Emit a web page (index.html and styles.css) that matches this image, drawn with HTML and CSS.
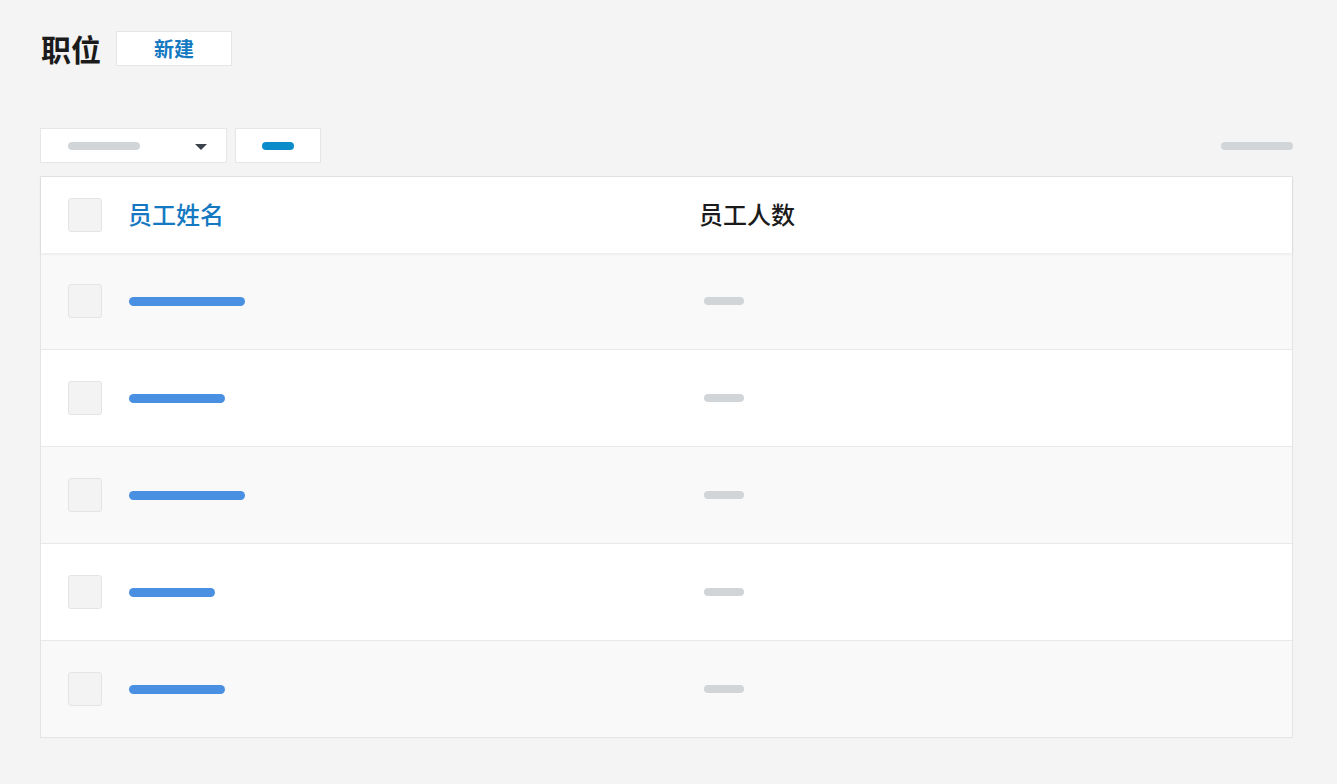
FILE: index.html
```html
<!DOCTYPE html>
<html lang="zh">
<head>
<meta charset="utf-8">
<title>职位</title>
<link rel="stylesheet" href="styles.css">
</head>
<body>
<div class="page">
  <div class="title-row">
    <h1 class="title">职位</h1>
    <button class="new-btn">新建</button>
  </div>

  <div class="toolbar">
    <div class="select">
      <span class="pill pill-gray pill-select"></span>
      <span class="caret"></span>
    </div>
    <div class="action">
      <span class="pill pill-cyan"></span>
    </div>
    <div class="toolbar-spacer"></div>
    <span class="pill pill-gray pill-right"></span>
  </div>

  <div class="table">
    <div class="row head">
      <span class="checkbox"></span>
      <div class="cell name"><span class="head-link">员工姓名</span></div>
      <div class="cell count"><span class="head-text">员工人数</span></div>
    </div>
    <div class="row alt">
      <span class="checkbox"></span>
      <div class="cell name"><span class="bar" style="width:116px"></span></div>
      <div class="cell count"><span class="num"></span></div>
    </div>
    <div class="row">
      <span class="checkbox"></span>
      <div class="cell name"><span class="bar" style="width:96px"></span></div>
      <div class="cell count"><span class="num"></span></div>
    </div>
    <div class="row alt">
      <span class="checkbox"></span>
      <div class="cell name"><span class="bar" style="width:116px"></span></div>
      <div class="cell count"><span class="num"></span></div>
    </div>
    <div class="row">
      <span class="checkbox"></span>
      <div class="cell name"><span class="bar" style="width:86px"></span></div>
      <div class="cell count"><span class="num"></span></div>
    </div>
    <div class="row alt last">
      <span class="checkbox"></span>
      <div class="cell name"><span class="bar" style="width:96px"></span></div>
      <div class="cell count"><span class="num"></span></div>
    </div>
  </div>
</div>
</body>
</html>
```

FILE: styles.css
```css
* { box-sizing: border-box; }

html, body {
  margin: 0;
  padding: 0;
  background: #f4f4f4;
  font-family: "Noto Sans CJK SC", "Noto Sans", "Liberation Sans", sans-serif;
}

.page {
  padding: 31px 44px 0 40px;
}

.title-row {
  display: flex;
  align-items: center;
  height: 35px;
  gap: 15px;
}

.title {
  margin: 0 0 0 1px;
  font-size: 30px;
  font-weight: 700;
  color: #1b1b1b;
  line-height: 35px;
}

.new-btn {
  width: 116px;
  height: 35px;
  background: #fff;
  border: 1px solid #e6e6e6;
  color: #1579c2;
  font-family: inherit;
  font-size: 20px;
  font-weight: 700;
  padding: 0;
  line-height: 1;
}

.toolbar {
  display: flex;
  align-items: center;
  margin-top: 62px;
  height: 35px;
}

.select {
  width: 187px;
  height: 35px;
  background: #fff;
  border: 1px solid #e6e6e6;
  display: flex;
  align-items: center;
  padding-left: 27px;
  padding-right: 19px;
}

.pill {
  display: block;
  height: 8px;
  border-radius: 4px;
}

.pill-gray { background: #d2d5d8; }
.pill-select { width: 72px; }
.pill-right { width: 72px; }
.pill-cyan { background: #0a8ccb; width: 32px; }

.caret {
  margin-left: auto;
  width: 0;
  height: 0;
  border-left: 6px solid transparent;
  border-right: 6px solid transparent;
  border-top: 6px solid #3b424b;
  margin-top: 3px;
}

.action {
  margin-left: 8px;
  width: 86px;
  height: 35px;
  background: #fff;
  border: 1px solid #e6e6e6;
  display: flex;
  align-items: center;
  justify-content: center;
}

.toolbar-spacer { flex: 1; }

.table {
  margin-top: 13px;
  background: #fff;
  border: 1px solid #e4e4e4;
}

.row {
  display: flex;
  align-items: center;
  height: 97px;
  padding-left: 27px;
  border-bottom: 1px solid #e8e8e8;
  background: #fff;
}

.row.alt { background: #f9f9f9; }
.row.last { border-bottom: none; height: 96px; }

.row.head {
  height: 76px;
  border-bottom: none;
  position: relative;
  z-index: 1;
  box-shadow: 0 1px 3px rgba(0, 0, 0, 0.08);
}

.row.head .checkbox { margin-top: -1px; }

.checkbox {
  flex: none;
  width: 34px;
  height: 34px;
  background: #f3f3f3;
  border: 1px solid #e4e4e4;
  border-radius: 3px;
}

.cell.name {
  margin-left: 26px;
  width: 571px;
  flex: none;
}

.cell.count { flex: 1; }

.head-link {
  display: block;
  font-size: 24px;
  font-weight: 500;
  color: #1579c2;
  line-height: 30px;
  margin-top: -3px;
}

.head-text {
  display: block;
  font-size: 24px;
  font-weight: 500;
  color: #1b1b1b;
  line-height: 30px;
  margin-top: -3px;
}

.bar {
  display: block;
  margin-left: 1px;
  height: 9px;
  border-radius: 4.5px;
  background: #4a90e2;
}

.num {
  display: block;
  margin-left: 5px;
  width: 40px;
  height: 8px;
  border-radius: 4px;
  background: #d2d5d8;
}
```
